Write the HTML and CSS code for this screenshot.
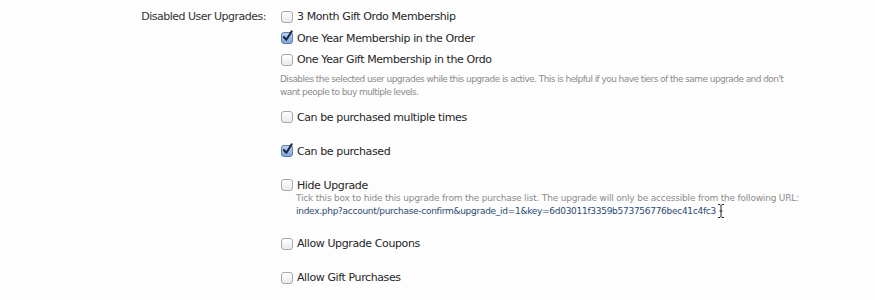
FILE: index.html
```html
<!DOCTYPE html>
<html>
<head>
<meta charset="utf-8">
<link rel="stylesheet" href="styles.css">
</head>
<body>
<div class="form">
  <div class="row">
    <div class="label">Disabled User Upgrades:</div>
    <div class="ctrl">
      <ul class="checklist">
        <li><span class="cb"></span>3 Month Gift Ordo Membership</li>
        <li><span class="cb checked"><svg viewBox="0 0 14 14"><path d="M3 7.5 L5.8 10.5 L11.5 1.5" /></svg></span>One Year Membership in the Order</li>
        <li><span class="cb"></span>One Year Gift Membership in the Ordo</li>
      </ul>
      <p class="hint">Disables the selected user upgrades while this upgrade is active. This is helpful if you have tiers of the same upgrade and don't<br>want people to buy multiple levels.</p>
    </div>
  </div>
  <div class="row single first">
    <div class="label"></div>
    <div class="ctrl"><div class="opt"><span class="cb"></span>Can be purchased multiple times</div></div>
  </div>
  <div class="row single">
    <div class="label"></div>
    <div class="ctrl"><div class="opt"><span class="cb checked"><svg viewBox="0 0 14 14"><path d="M3 7.5 L5.8 10.5 L11.5 1.5" /></svg></span>Can be purchased</div></div>
  </div>
  <div class="row single">
    <div class="label"></div>
    <div class="ctrl">
      <div class="opt"><span class="cb"></span>Hide Upgrade</div>
      <p class="hint indent">Tick this box to hide this upgrade from the purchase list. The upgrade will only be accessible from the following URL:<br><span class="url">index.php?account/purchase-confirm&amp;upgrade_id=1&amp;key=6d03011f3359b573756776bec41c4fc3</span><span class="cursor"><svg viewBox="0 0 8 14"><path d="M1 0.5 H3 L4 1.5 L5 0.5 H7 M4 1.5 V12.5 M1 13.5 H3 L4 12.5 L5 13.5 H7 M2.5 7 H5.5" /></svg></span></p>
    </div>
  </div>
  <div class="row single">
    <div class="label"></div>
    <div class="ctrl"><div class="opt"><span class="cb"></span>Allow Upgrade Coupons</div></div>
  </div>
  <div class="row single">
    <div class="label"></div>
    <div class="ctrl"><div class="opt"><span class="cb"></span>Allow Gift Purchases</div></div>
  </div>
</div>
</body>
</html>
```
FILE: styles.css
```css
html, body {
  margin: 0;
  padding: 0;
  background: #fdfdfd;
}
body {
  font-family: "DejaVu Sans", Verdana, sans-serif;
  font-size: 11px;
  letter-spacing: -0.4px;
  color: #262626;
}
.form {
  padding-top: 6px;
}
.row {
  display: flex;
}
.label {
  width: 266px;
  flex: none;
  text-align: right;
  line-height: 21.5px;
  color: #333;
  letter-spacing: -0.5px;
}
.ctrl {
  margin-left: 15px;
}
.checklist {
  list-style: none;
  margin: 0;
  padding: 0;
}
.checklist li, .opt {
  display: flex;
  align-items: center;
  height: 21.5px;
  white-space: nowrap;
}
.opt {
  height: 16px;
}
.row.single {
  margin-top: 18px;
}
.row.single.first {
  margin-top: 10.5px;
}
.cb {
  position: relative;
  flex: none;
  width: 10px;
  height: 10px;
  border: 1px solid #a8a8a8;
  border-radius: 3px;
  background: linear-gradient(#ffffff, #e9e9e9);
  margin-right: 4px;
}
.cb.checked {
  background: linear-gradient(#bcd3ee, #7ea6d8);
  border-color: #5c7fae;
}
.cb svg {
  position: absolute;
  left: -1px;
  top: -3px;
  width: 13px;
  height: 13px;
  fill: none;
  stroke: #1b2b47;
  stroke-width: 2.2;
  stroke-linecap: round;
  stroke-linejoin: round;
}
.hint {
  margin: 2px 0 0 -1px;
  font-size: 9px;
  line-height: 13px;
  color: #8c8c8c;
  white-space: nowrap;
  letter-spacing: -0.57px;
}
.hint.indent {
  margin: -1.5px 0 0 15px;
  letter-spacing: -0.2px;
}
.url {
  color: #2a4a72;
  letter-spacing: -0.28px;
}
.cursor {
  position: relative;
  display: inline-block;
  width: 8px;
  height: 0;
  vertical-align: baseline;
}
.cursor svg {
  position: absolute;
  left: 1px;
  top: -10px;
  width: 8px;
  height: 14px;
  fill: none;
  stroke: #222;
  stroke-width: 1;
}
```
